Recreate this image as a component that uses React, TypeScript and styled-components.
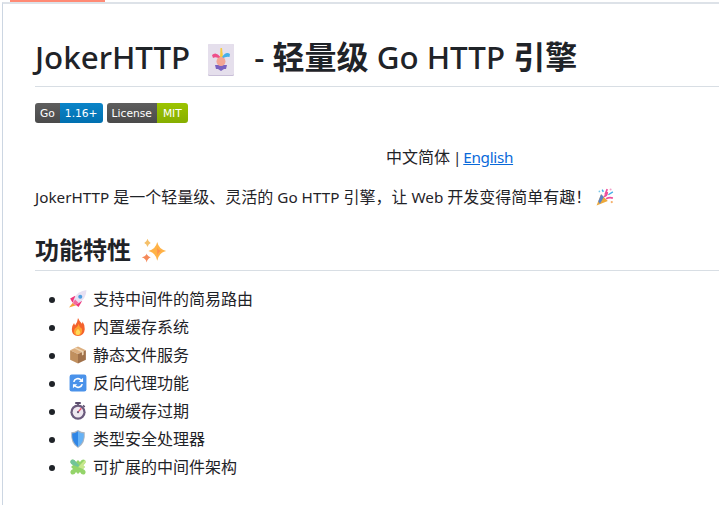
import { ReactNode } from 'react';
import styled, { createGlobalStyle } from 'styled-components';

const GlobalStyle = createGlobalStyle`
  html, body {
    margin: 0;
    padding: 0;
    width: 719px;
    height: 505px;
    overflow: hidden;
    background: #ffffff;
  }
`;

const Frame = styled.div`
  position: relative;
  width: 717px;
  height: 503px;
  margin: 2px 0 0 2px;
  box-sizing: border-box;
  overflow: hidden;
  border-top: 2px solid #dde2e8;
  border-left: 1px solid #ccd6e2;
  font-family: 'Noto Sans', 'Noto Sans CJK SC', sans-serif;
  font-size: 16px;
  line-height: 24px;
  color: #1f2328;
`;

const ProgressBar = styled.div`
  position: fixed;
  top: 0;
  left: 10px;
  width: 95px;
  height: 2px;
  background: #ff8a75;
`;

const Article = styled.article`
  width: 829px;
  padding: 31px 0 0 32px;
`;

const Latin = styled.span`
  font-size: 0.955em;
`;

const Title = styled.h1`
  margin: 0 0 16px;
  height: 51px;
  border-bottom: 1px solid #d8dee4;
  font-size: 32px;
  line-height: 44px;
  font-weight: 500;
  white-space: nowrap;

  ${Latin} {
    font-size: 31.3px;
  }
`;

const Strong = styled.span`
  font-weight: 700;
`;

const BadgeRow = styled.p`
  display: flex;
  gap: 4px;
  margin: 0 0 22px;
  height: 20px;
`;

const Badge = styled.span`
  display: inline-flex;
  height: 20px;
  border-radius: 3px;
  overflow: hidden;
  font-family: 'DejaVu Sans', sans-serif;
  font-size: 10.7px;
  line-height: 21px;
  color: #ffffff;
`;

const BadgeKey = styled.span`
  padding: 0 5px;
  background: linear-gradient(#5e5e5e, #4a4a4a);
`;

const BadgeValue = styled.span<{ $color: string; $pad: number }>`
  padding: 0 ${(p) => p.$pad}px;
  background: ${(p) => p.$color};
`;

const Centered = styled.p`
  margin: 0 0 16px;
  text-align: center;
  height: 24px;
`;

const Separator = styled(Latin)`
  letter-spacing: -1px;
`;

const Link = styled.a`
  color: #0969da;
  text-decoration: underline;
  letter-spacing: -0.3px;
`;

const Paragraph = styled.p`
  margin: 0 0 24px;
  height: 24px;
  white-space: nowrap;
`;

const SectionTitle = styled.h2`
  margin: 0 0 16px;
  height: 37px;
  border-bottom: 1px solid #d8dee4;
  font-size: 24px;
  line-height: 34px;
  font-weight: 700;
`;

const List = styled.ul`
  margin: 0;
  padding: 0 0 0 32px;
`;

const Item = styled.li`
  height: 24px;
  margin-bottom: 4px;
`;

const Emoji = styled.svg<{ $size: number; $gap: number; $before?: number; $drop?: number }>`
  display: inline-block;
  width: ${(p) => p.$size}px;
  height: ${(p) => p.$size}px;
  margin: 0 ${(p) => p.$gap}px 0 ${(p) => p.$before ?? 2}px;
  vertical-align: ${(p) => -(p.$drop ?? 3)}px;
`;

type IconProps = { size?: number; gap?: number; before?: number; drop?: number };

function Icon({ size = 18, gap = 6, before = 2, drop = 3, children }: IconProps & { children: ReactNode }) {
  return (
    <Emoji viewBox="0 0 32 32" $size={size} $gap={gap} $before={before} $drop={drop}>
      {children}
    </Emoji>
  );
}

const Joker = (p: IconProps) => (
  <Icon {...p}>
    <rect x="3" y="0" width="26" height="32" rx="1.500" fill="#c9bfd8" />
    <rect x="3" y="0" width="26" height="31" rx="1.500" fill="#e5dfec" />
    <path d="M15 13 L15.500 4 L17 4 L18 13Z" fill="#f6cc42" />
    <path d="M15.500 13 Q11 7 7 11 L8 14 Q11 12 15 15Z" fill="#ee4f8a" />
    <path d="M17 13 Q21 7 25 10 L24.500 13 Q21 12 17 15Z" fill="#45b0e8" />
    <path d="M10 21 L13 21 L16 19 L19 21 L22 21 L21 25 L19 25 L16 27 L13 25 L11 25Z" fill="#7a62c0" />
    <circle cx="16" cy="17.500" r="4.500" fill="#f3a594" />
  </Icon>
);

const Sparkles = (p: IconProps) => (
  <Icon {...p}>
    <path d="M20 5 Q22 14 31 16 Q22 18 20 28 Q18 18 9 16 Q18 14 20 5Z" fill="#ffb347" />
    <path d="M20 12 Q21 15 25 16 Q21 17 20 22Z" fill="#ff8f4f" />
    <path d="M8 1 Q9 5 12 6 Q9 7 8 11 Q7 7 4 6 Q7 5 8 1Z" fill="#f5c06a" />
    <path d="M7 19 Q8 23 12 24 Q8 25 7 30 Q6 25 1 24 Q6 23 7 19Z" fill="#f58a5a" />
  </Icon>
);

const Party = (p: IconProps) => (
  <Icon {...p}>
    <path d="M1 31 L9 11 L21 23Z" fill="#eda93a" />
    <path d="M4 24 L9 11 L14 16 L7 28Z" fill="#5a82c8" />
    <path d="M14 15 Q20 14 20 7 M18 19 Q24 16 30 18 M16 12 L20 2" stroke="#ee4f9a" strokeWidth="3" fill="none" />
    <path d="M22 12 L30 7 M11 3 L13 7" stroke="#45b0e8" strokeWidth="2.600" fill="none" />
    <circle cx="28" cy="25" r="2" fill="#f5b06a" />
    <circle cx="26" cy="2.500" r="1.800" fill="#f0a0c8" />
    <circle cx="6" cy="6" r="1.500" fill="#7ac8e8" />
  </Icon>
);

const Rocket = (p: IconProps) => (
  <Icon {...p}>
    <path d="M9 20 L0 31 L13 27Z" fill="#f5a03a" />
    <path d="M11 10 L2 15 L6 22 L13 18Z" fill="#f0357a" />
    <path d="M23 20 L17 30 L10 25 L15 18Z" fill="#f0357a" />
    <path d="M7 23 Q9 11 17 5 Q24 1 31 0 Q31 8 27 14 Q21 23 10 26Z" fill="#e8e0f2" />
    <path d="M7 23 L10 26 Q14 25 17 23 L11 17 Q8 20 7 23Z" fill="#f46a9e" />
    <circle cx="20" cy="12" r="3.600" fill="#4e9fe0" />
  </Icon>
);

const Fire = (p: IconProps) => (
  <Icon {...p}>
    <path d="M16 0 Q19 7 23 10 Q24 8 24 6 Q29 13 28 20 Q27 32 16 32 Q5 32 5 20 Q5 14 9 9 Q10 12 11 13 Q15 8 16 0Z" fill="#f4622c" />
    <path d="M17 10 Q18 16 23 19 Q25 29 16 31 Q8 30 9 22 Q10 18 13 17 Q16 15 17 10Z" fill="#ff9f2e" />
    <path d="M16 19 Q20 23 20 26 Q19 30 16 30 Q12 30 12 26 Q12 23 16 19Z" fill="#ffd95a" />
  </Icon>
);

const Box = (p: IconProps) => (
  <Icon {...p}>
    <path d="M16 1 L30 7.500 L16 14 L2 7.500Z" fill="#dcae7e" />
    <path d="M2 7.500 L16 14 L16 31 L2 24.500Z" fill="#c08f5e" />
    <path d="M30 7.500 L16 14 L16 31 L30 24.500Z" fill="#a0714a" />
    <path d="M9 4 L23 11 L23 17 L26 15.500 L26 9.500 L12 2.600Z" fill="#eed4b2" />
  </Icon>
);

const Refresh = (p: IconProps) => (
  <Icon {...p}>
    <rect x="1" y="1" width="30" height="30" rx="4" fill="#4a92ea" />
    <path d="M8.500 14 A7.500 7.500 0 0 1 21.500 11" stroke="#ffffff" strokeWidth="3" fill="none" />
    <path d="M25 6.500 L25 14 L17.500 14Z" fill="#ffffff" />
    <path d="M23.500 18 A7.500 7.500 0 0 1 10.500 21" stroke="#ffffff" strokeWidth="3" fill="none" />
    <path d="M7 25.500 L7 18 L14.500 18Z" fill="#ffffff" />
  </Icon>
);

const Stopwatch = (p: IconProps) => (
  <Icon {...p}>
    <rect x="11" y="0" width="10" height="3.500" rx="1" fill="#5a4c6c" />
    <rect x="14.500" y="3" width="3" height="4" fill="#5a4c6c" />
    <path d="M25 6 L28 9" stroke="#5a4c6c" strokeWidth="2.600" />
    <circle cx="16" cy="18" r="13.500" fill="#6a5a7c" />
    <circle cx="16" cy="18" r="9.500" fill="#eee8f0" />
    <path d="M16 18 L22 11" stroke="#ea4f6a" strokeWidth="2.400" />
    <circle cx="16" cy="18" r="2" fill="#6a5a7c" />
  </Icon>
);

const Shield = (p: IconProps) => (
  <Icon {...p}>
    <path d="M16 0 Q22 4 28 4 Q30 24 16 32 Q2 24 4 4 Q10 4 16 0Z" fill="#aab4c0" />
    <path d="M16 2 Q21 6 26.500 6 Q27 22 16 30Z" fill="#66b2f6" />
    <path d="M16 2 Q11 6 5.500 6 Q5 22 16 30Z" fill="#2f86e6" />
  </Icon>
);

const Puzzle = (p: IconProps) => (
  <Icon {...p}>
    <g transform="rotate(45 16 16) translate(16 16) scale(1.25) translate(-16 -16)">
      <path d="M9 9 L13 9 Q11 3 16 2 Q21 3 19 9 L23 9 L23 13 Q29 11 30 16 Q29 21 23 19 L23 23 L19 23 Q21 29 16 30 Q11 29 13 23 L9 23 L9 19 Q3 21 2 16 Q3 11 9 13Z" fill="#94d46a" />
      <path d="M16 2 Q21 3 19 9 L23 9 L23 13 L16 16Z" fill="#c8e88c" />
      <path d="M16 16 L9 19 Q3 21 2 16 Q3 11 9 13 L16 13Z" fill="#72c49a" />
    </g>
  </Icon>
);

const features: { icon: ReactNode; text: string }[] = [
  { icon: <Rocket />, text: '支持中间件的简易路由' },
  { icon: <Fire />, text: '内置缓存系统' },
  { icon: <Box />, text: '静态文件服务' },
  { icon: <Refresh />, text: '反向代理功能' },
  { icon: <Stopwatch />, text: '自动缓存过期' },
  { icon: <Shield />, text: '类型安全处理器' },
  { icon: <Puzzle />, text: '可扩展的中间件架构' },
];

export default function App() {
  return (
    <>
      <GlobalStyle />
      <ProgressBar />
      <Frame>
        <Article>
          <Title>
            <Latin>JokerHTTP </Latin>
            <Joker size={32} gap={17} before={7} drop={7} />
            <Latin>- </Latin>
            <Strong>轻量级</Strong>
            <Latin> Go HTTP </Latin>
            <Strong>引擎</Strong>
          </Title>
          <BadgeRow>
            <Badge>
              <BadgeKey>Go</BadgeKey>
              <BadgeValue $pad={5} $color="linear-gradient(#0a84c8, #0070b0)">1.16+</BadgeValue>
            </Badge>
            <Badge>
              <BadgeKey>License</BadgeKey>
              <BadgeValue $pad={6} $color="linear-gradient(#9cc400, #86ae00)">MIT</BadgeValue>
            </Badge>
          </BadgeRow>
          <Centered>
            中文简体<Separator> | </Separator>
            <Link href="#"><Latin>English</Latin></Link>
          </Centered>
          <Paragraph>
            <Latin>JokerHTTP </Latin>是一个轻量级、灵活的<Latin> Go HTTP </Latin>引擎，让<Latin> Web </Latin>开发变得简单有趣！
            <Party before={5} gap={0} />
          </Paragraph>
          <SectionTitle>
            功能特性 <Sparkles size={26} before={4} gap={0} drop={5} />
          </SectionTitle>
          <List>
            {features.map((f) => (
              <Item key={f.text}>
                {f.icon}
                {f.text}
              </Item>
            ))}
          </List>
        </Article>
      </Frame>
    </>
  );
}
